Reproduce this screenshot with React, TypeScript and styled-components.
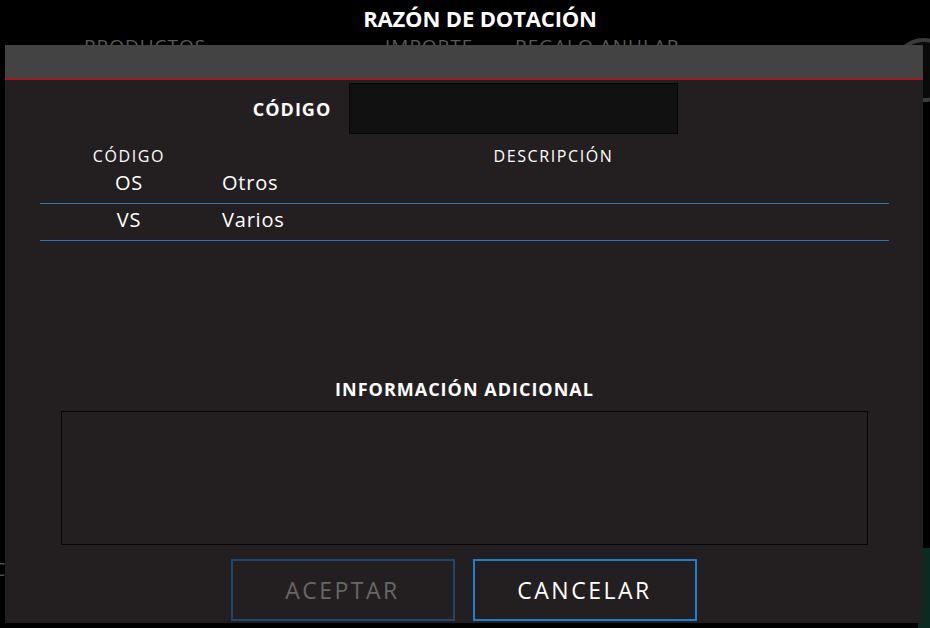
import styled, { createGlobalStyle } from "styled-components";

type Reason = {
  code: string;
  description: string;
};

const reasons: Reason[] = [
  { code: "OS", description: "Otros" },
  { code: "VS", description: "Varios" },
];

const GlobalStyle = createGlobalStyle`
  html, body {
    margin: 0;
    padding: 0;
    background: #000;
  }
  * {
    box-sizing: border-box;
  }
`;

const Page = styled.div`
  position: relative;
  width: 930px;
  height: 628px;
  overflow: hidden;
  background: #000;
  font-family: "Open Sans", "Liberation Sans", sans-serif;
  color: #fff;
`;

/* ---------- screen behind the dialog ---------- */

const ColumnHeads = styled.div`
  display: flex;
  padding: 35px 0 0 84px;
  color: #5a5a5a;
  font-size: 19px;
  line-height: 22px;
  letter-spacing: 1px;
`;

const ColumnHead = styled.span<{ $width: number }>`
  width: ${(p) => p.$width}px;
`;

const RoundButton = styled.div`
  position: absolute;
  top: 38px;
  right: -26px;
  width: 64px;
  height: 64px;
  border-radius: 50%;
  border: 4px solid #3b3b3b;
  background: #0a0a0a;
`;

const GreenPanel = styled.div`
  position: absolute;
  right: 0;
  bottom: 0;
  width: 12px;
  height: 80px;
  background: #0b2a21;
`;

const EdgeGlyph = styled.span<{ $top: number }>`
  position: absolute;
  left: -6px;
  top: ${(p) => p.$top}px;
  color: #555;
  font-size: 18px;
`;

/* ---------- dialog ---------- */

const Overlay = styled.div`
  position: absolute;
  inset: 0;
  display: flex;
  flex-direction: column;
  align-items: flex-start;
  padding-left: 5px;
`;

const Title = styled.h1`
  margin: 0 0 11px;
  width: 950px;
  height: 34px;
  padding-top: 2px;
  text-align: center;
  font-size: 22px;
  font-weight: 700;
  letter-spacing: -0.15px;
  line-height: 32px;
`;

const Dialog = styled.div`
  width: 918px;
  height: 578px;
  display: flex;
  flex-direction: column;
  background: #231f20;
`;

const DialogBar = styled.div`
  height: 35px;
  background: #434343;
  border-bottom: 2px solid #a01b22;
`;

const DialogBody = styled.div`
  flex: 1;
  display: flex;
  flex-direction: column;
  padding: 3px 34px 2px 35px;
`;

const CodeRow = styled.div`
  display: flex;
  align-items: center;
  justify-content: center;
  gap: 18px;
  padding-left: 2px;
`;

const CodeLabel = styled.label`
  font-size: 18px;
  font-weight: 700;
  letter-spacing: 1px;
`;

const CodeInput = styled.div`
  width: 329px;
  height: 51px;
  background: #111;
  border: 1px solid #050505;
`;

const Table = styled.div`
  margin-top: 11px;
  display: flex;
  flex-direction: column;
`;

const HeadRow = styled.div`
  display: grid;
  grid-template-columns: 178px 1fr;
  height: 22px;
  align-items: center;
  font-size: 16px;
  letter-spacing: 1.6px;
  text-align: center;
`;

const Row = styled.div`
  display: grid;
  grid-template-columns: 178px 1fr;
  height: 37px;
  padding-bottom: 5px;
  align-items: center;
  border-bottom: 1px solid #2d74bb;
  font-size: 20px;
  letter-spacing: 0.8px;
`;

const CodeCell = styled.span`
  text-align: center;
`;

const DescCell = styled.span`
  padding-left: 4px;
`;

const InfoTitle = styled.h2`
  margin: 136px 0 0;
  text-align: center;
  font-size: 18px;
  font-weight: 700;
  letter-spacing: 1px;
  line-height: 24px;
`;

const InfoBox = styled.div`
  margin: 10px 21px 0;
  height: 134px;
  border: 1px solid #050505;
  background: #231f20;
`;

const Buttons = styled.div`
  margin-top: auto;
  display: flex;
  justify-content: center;
  gap: 18px;
  padding-right: 2px;
`;

const Button = styled.button<{ $disabled?: boolean }>`
  width: 224px;
  height: 62px;
  background: transparent;
  border: 2px solid ${(p) => (p.$disabled ? "#1d4670" : "#1f7fd0")};
  color: ${(p) => (p.$disabled ? "#676767" : "#fff")};
  font-family: "Open Sans", "Liberation Sans", sans-serif;
  font-size: 23px;
  letter-spacing: 2.5px;
  padding: 0;
  cursor: pointer;
`;

export default function App() {
  return (
    <Page>
      <GlobalStyle />
      <ColumnHeads>
        <ColumnHead $width={301}>PRODUCTOS</ColumnHead>
        <ColumnHead $width={130}>IMPORTE</ColumnHead>
        <ColumnHead $width={200}>REGALO ANULAR</ColumnHead>
      </ColumnHeads>
      <RoundButton />
      <GreenPanel />
      <EdgeGlyph $top={557}>C</EdgeGlyph>
      <EdgeGlyph $top={585}>I</EdgeGlyph>

      <Overlay>
        <Title>RAZÓN DE DOTACIÓN</Title>
        <Dialog>
          <DialogBar />
          <DialogBody>
            <CodeRow>
              <CodeLabel>CÓDIGO</CodeLabel>
              <CodeInput />
            </CodeRow>
            <Table>
              <HeadRow>
                <span>CÓDIGO</span>
                <span>DESCRIPCIÓN</span>
              </HeadRow>
              {reasons.map((r) => (
                <Row key={r.code}>
                  <CodeCell>{r.code}</CodeCell>
                  <DescCell>{r.description}</DescCell>
                </Row>
              ))}
            </Table>
            <InfoTitle>INFORMACIÓN ADICIONAL</InfoTitle>
            <InfoBox />
            <Buttons>
              <Button $disabled>ACEPTAR</Button>
              <Button>CANCELAR</Button>
            </Buttons>
          </DialogBody>
        </Dialog>
      </Overlay>
    </Page>
  );
}
